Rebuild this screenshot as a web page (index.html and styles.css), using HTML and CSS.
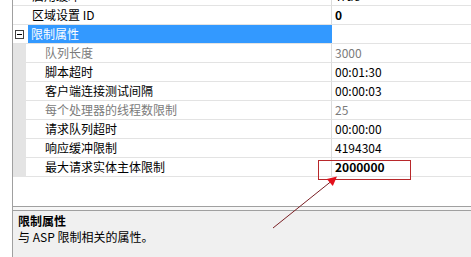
FILE: index.html
```html
<!DOCTYPE html>
<html lang="zh-CN">
<head>
    <meta charset="UTF-8">
    <title>ASP 属性</title>
    <link rel="stylesheet" href="styles.css">
</head>
<body>
    <div class="frame">
        <div class="grid">
            <div class="rows">
                <div class="row">
                    <div class="margin"></div>
                    <div class="label top">启用缓冲</div>
                    <div class="value">True</div>
                </div>
                <div class="row">
                    <div class="margin"></div>
                    <div class="label top">区域设置 ID</div>
                    <div class="value bold">0</div>
                </div>
                <div class="row category">
                    <div class="margin">
                        <svg class="expander" width="9" height="9" viewBox="0 0 9 9">
                            <rect x="0.5" y="0.5" width="8" height="8" fill="#fff" stroke="#404040"/>
                            <line x1="2" y1="4.5" x2="7" y2="4.5" stroke="#000"/>
                        </svg>
                    </div>
                    <div class="label selected">限制属性</div>
                    <div class="value"></div>
                </div>
                <div class="row sub disabled">
                    <div class="margin"></div>
                    <div class="label">队列长度</div>
                    <div class="value">3000</div>
                </div>
                <div class="row sub">
                    <div class="margin"></div>
                    <div class="label">脚本超时</div>
                    <div class="value">00:01:30</div>
                </div>
                <div class="row sub">
                    <div class="margin"></div>
                    <div class="label">客户端连接测试间隔</div>
                    <div class="value">00:00:03</div>
                </div>
                <div class="row sub disabled">
                    <div class="margin"></div>
                    <div class="label">每个处理器的线程数限制</div>
                    <div class="value">25</div>
                </div>
                <div class="row sub">
                    <div class="margin"></div>
                    <div class="label">请求队列超时</div>
                    <div class="value">00:00:00</div>
                </div>
                <div class="row sub">
                    <div class="margin"></div>
                    <div class="label">响应缓冲限制</div>
                    <div class="value">4194304</div>
                </div>
                <div class="row sub">
                    <div class="margin"></div>
                    <div class="label">最大请求实体主体限制</div>
                    <div class="value bold">2000000</div>
                </div>
            </div>
        </div>
        <div class="splitter"></div>
        <div class="description">
            <div class="desc-title">限制属性</div>
            <div class="desc-text">与 ASP 限制相关的属性。</div>
        </div>
    </div>

    <!-- annotation drawn over the screenshot -->
    <svg class="annotation" width="471" height="257" viewBox="0 0 471 257">
        <rect x="318.5" y="160.5" width="92" height="19" fill="none" stroke="#b8282b" stroke-width="1"/>
        <line x1="273" y1="228" x2="331" y2="181.5" stroke="#7a1f24" stroke-width="1"/>
        <polygon points="337,176.5 332.8,186 326.8,179" fill="#e3101c"/>
    </svg>
</body>
</html>
```
FILE: styles.css
```css
body {
    margin: 0;
    background: #fff;
    font-family: "Noto Sans CJK SC", sans-serif;
    font-size: 12px;
    color: #000;
    width: 471px;
    height: 257px;
    overflow: hidden;
    position: relative;
}
.frame {
    margin-left: 12px;
    border-left: 1px solid #a0a0a0;
    height: 257px;
    display: flex;
    flex-direction: column;
}
.grid {
    height: 207px;
    box-sizing: border-box;
    border-bottom: 1px solid #a0a0a0;
    overflow: hidden;
    background: #fff;
}
.rows {
    margin-top: -13px;
}
.row {
    display: grid;
    grid-template-columns: 13px 306px 1fr;
    height: 19px;
}
.row > div {
    border-bottom: 1px solid #e3e3e3;
    line-height: 18px;
    white-space: nowrap;
}
.label {
    border-right: 1px solid #dcdcdc;
    padding-left: 19px;
}
.label.top {
    padding-left: 6px;
}
.value {
    padding-left: 3px;
}
.bold {
    font-weight: bold;
}
.sub .margin {
    background: #e4e4e4;
    border-bottom-color: #e4e4e4;
}
.disabled .label, .disabled .value {
    color: #7b7b7b;
}
.category {
    grid-template-columns: 15px 304px 1fr;
}
.category .margin {
    display: flex;
    align-items: center;
    padding-left: 2px;
}
.label.selected {
    background: #3399ff;
    color: #fff;
    padding-left: 3px;
    border-right: none;
}
.splitter {
    height: 3px;
    background: #f7f7f7;
}
.description {
    flex: 1;
    background: #f0f0f0;
    border-top: 1px solid #a0a0a0;
    padding: 2px 5px 0;
    line-height: 16px;
}
.desc-title {
    font-weight: bold;
}
.annotation {
    position: absolute;
    left: 0;
    top: 0;
    pointer-events: none;
}
```
